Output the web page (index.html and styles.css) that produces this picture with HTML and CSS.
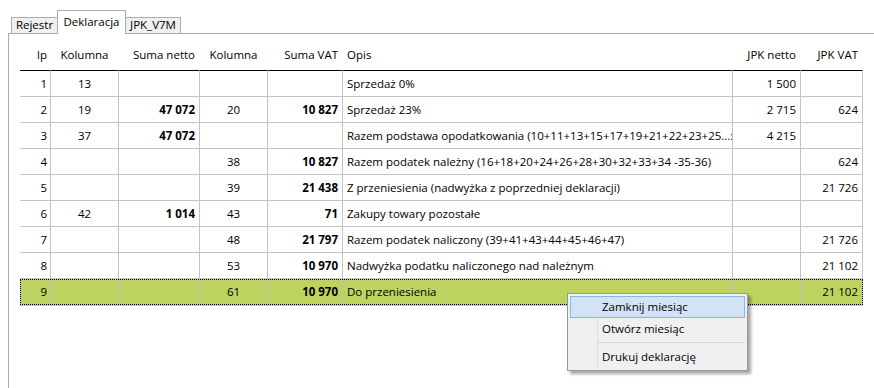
FILE: index.html
```html
<!DOCTYPE html>
<html>
<head>
	<title>Deklaracja</title>
	<link rel="stylesheet" href="styles.css">
</head>
<body>
	<div class="tabs">
		<div class="tab">Rejestr</div>
		<div class="tab active">Deklaracja</div>
		<div class="tab">JPK_V7M</div>
	</div>
	<div class="panel">
		<table class="grid">
			<tr>
				<th class="c_lp">lp</th>
				<th class="c_kol">Kolumna</th>
				<th class="c_sum">Suma netto</th>
				<th class="c_kol">Kolumna</th>
				<th class="c_vat">Suma VAT</th>
				<th class="c_opis">Opis</th>
				<th class="c_jpk">JPK netto</th>
				<th class="c_jvat">JPK VAT</th>
			</tr>
			<tr>
				<td class="num">1</td><td class="mid">13</td><td class="num b"></td><td class="mid"></td><td class="num b"></td>
				<td class="opis">Sprzedaż 0%</td><td class="num">1 500</td><td class="num"></td>
			</tr>
			<tr>
				<td class="num">2</td><td class="mid">19</td><td class="num b">47 072</td><td class="mid">20</td><td class="num b">10 827</td>
				<td class="opis">Sprzedaż 23%</td><td class="num">2 715</td><td class="num">624</td>
			</tr>
			<tr>
				<td class="num">3</td><td class="mid">37</td><td class="num b">47 072</td><td class="mid"></td><td class="num b"></td>
				<td class="opis">Razem podstawa opodatkowania (10+11+13+15+17+19+21+22+23+25...:</td><td class="num">4 215</td><td class="num"></td>
			</tr>
			<tr>
				<td class="num">4</td><td class="mid"></td><td class="num b"></td><td class="mid">38</td><td class="num b">10 827</td>
				<td class="opis">Razem podatek należny (16+18+20+24+26+28+30+32+33+34 -35-36)</td><td class="num"></td><td class="num">624</td>
			</tr>
			<tr>
				<td class="num">5</td><td class="mid"></td><td class="num b"></td><td class="mid">39</td><td class="num b">21 438</td>
				<td class="opis">Z przeniesienia (nadwyżka z poprzedniej deklaracji)</td><td class="num"></td><td class="num">21 726</td>
			</tr>
			<tr>
				<td class="num">6</td><td class="mid">42</td><td class="num b">1 014</td><td class="mid">43</td><td class="num b">71</td>
				<td class="opis">Zakupy towary pozostałe</td><td class="num"></td><td class="num"></td>
			</tr>
			<tr>
				<td class="num">7</td><td class="mid"></td><td class="num b"></td><td class="mid">48</td><td class="num b">21 797</td>
				<td class="opis">Razem podatek naliczony (39+41+43+44+45+46+47)</td><td class="num"></td><td class="num">21 726</td>
			</tr>
			<tr>
				<td class="num">8</td><td class="mid"></td><td class="num b"></td><td class="mid">53</td><td class="num b">10 970</td>
				<td class="opis">Nadwyżka podatku naliczonego nad należnym</td><td class="num"></td><td class="num">21 102</td>
			</tr>
			<tr class="sel">
				<td class="num">9</td><td class="mid"></td><td class="num b"></td><td class="mid">61</td><td class="num b">10 970</td>
				<td class="opis">Do przeniesienia</td><td class="num"></td><td class="num">21 102</td>
			</tr>
			<tr>
				<td class="num"></td><td class="mid"></td><td class="num b"></td><td class="mid"></td><td class="num b"></td>
				<td class="opis"></td><td class="num"></td><td class="num"></td>
			</tr>
		</table>
	</div>
	<div class="menu">
		<div class="item hover">Zamknij miesiąc</div>
		<div class="item">Otwórz miesiąc</div>
		<div class="sep"></div>
		<div class="item">Drukuj deklarację</div>
	</div>
</body>
</html>
```

FILE: styles.css
```css
body{
	margin: 0;
	height: 388px;
	overflow: hidden;
	background-color: #fff;
	color: #000;
	font-family: "Open Sans", "Liberation Sans", sans-serif;
	font-size: 11.5px;
}
.tabs{
	display: flex;
	align-items: flex-end;
	height: 33px;
	margin-left: 8px;
	padding-left: 3px;
	border-bottom: 1px solid #acacac;
}
.tab{
	box-sizing: border-box;
	height: 16px;
	line-height: 13px;
	border: 1px solid #acacac;
	border-bottom: none;
	background-color: #f0f0f0;
	text-align: center;
	width: 47px;
}
.tab + .tab{
	margin-left: -1px;
}
.tab.active{
	width: 69px;
	height: 24px;
	margin-bottom: -1px;
	padding-top: 3px;
	line-height: 15px;
	background-color: #fff;
}
.tab:last-child{
	width: 56px;
}
.panel{
	margin-left: 8px;
	height: 360px;
	padding: 6px 0 0 11px;
	border-left: 1px solid #acacac;
}
.grid{
	table-layout: fixed;
	width: 843px;
	border-collapse: separate;
	border-spacing: 0;
}
.grid th{
	box-sizing: border-box;
	font-weight: normal;
	line-height: 30px;
	padding: 0 4px;
	white-space: nowrap;
	border-right: 1px solid transparent;
	border-bottom: 1px solid #000;
}
.grid td{
	line-height: 25px;
	padding: 0 4px;
	white-space: nowrap;
	overflow: hidden;
	text-overflow: clip;
	border-right: 1px solid #c4c4c4;
	border-bottom: 1px solid #c4c4c4;
}
.c_lp{ width: 31px; text-align: right; padding-right: 3px !important; }
.c_kol{ width: 68px; text-align: center; }
.c_sum{ width: 81px; text-align: right; }
.c_vat{ width: 75px; text-align: right; }
.c_opis{ width: 390px; text-align: left; }
.c_jpk{ width: 68px; text-align: right; }
.c_jvat{ width: 62px; text-align: right; }
.num{
	text-align: right;
}
.grid td:first-child{
	padding-right: 3px;
}
.mid{
	text-align: center;
}
.b{
	font-weight: bold;
}
.opis{
	text-align: left;
}
.sel td{
	background-color: #bdd35f;
}
.sel{
	outline: 1px dotted #000;
	outline-offset: -1px;
}
.menu{
	position: absolute;
	left: 567px;
	top: 293px;
	width: 181px;
	box-sizing: border-box;
	padding: 2px;
	border: 1px solid #979797;
	background: linear-gradient(to right, transparent 27px, #dcdcdc 27px, #dcdcdc 28px, transparent 28px) content-box no-repeat, #f0f0f0;
	box-shadow: 3px 3px 3px rgba(0, 0, 0, 0.35);
}
.item{
	height: 22px;
	box-sizing: border-box;
	line-height: 20px;
	padding-left: 31px;
	border: 1px solid transparent;
}
.item.hover{
	background-color: #d1e3f5;
	border-color: #84b6e8;
}
.sep{
	margin: 2px 0 3px 27px;
	border-top: 1px solid #d7d7d7;
}
```
